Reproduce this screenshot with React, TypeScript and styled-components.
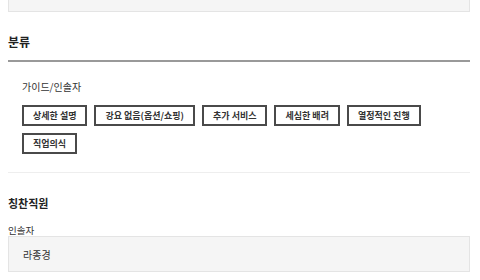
import styled, { createGlobalStyle } from "styled-components";

const GlobalStyle = createGlobalStyle`
  html, body {
    margin: 0;
    padding: 0;
    background: #fff;
  }
  body {
    font-family: "Noto Sans CJK KR", "Noto Sans", sans-serif;
    color: #333;
  }
`;

const Page = styled.div`
  width: 462px;
  padding: 0 10px 0 8px;
`;

const PrevField = styled.div`
  height: 11px;
  background-color: #f5f5f5;
  border: 1px solid #e4e4e4;
  border-top: none;
`;

const SectionHeader = styled.div`
  padding: 22px 0 10px;
  font-size: 12px;
  line-height: 16px;
  font-weight: bold;
  color: #222;
  border-bottom: 2px solid #999;
`;

const Group = styled.div`
  padding: 18px 14px 18px;
  border-bottom: 1px solid #eee;
`;

const GroupLabel = styled.div`
  font-size: 10px;
  line-height: 14px;
  color: #333;
  margin-bottom: 11px;
`;

const Chips = styled.div`
  display: flex;
  flex-wrap: wrap;
  gap: 7px 7px;
`;

const Chip = styled.button<{ $active?: boolean }>`
  height: 21px;
  padding: 0 9px;
  border: 2px solid #4a4a4a;
  background-color: ${(p) => (p.$active ? "#444" : "#fff")};
  color: ${(p) => (p.$active ? "#fff" : "#333")};
  font-family: inherit;
  font-size: 9px;
  font-weight: bold;
  line-height: 17px;
  cursor: pointer;
`;

const SubHeader = styled.div`
  margin-top: 22px;
  font-size: 11px;
  line-height: 16px;
  font-weight: bold;
  color: #222;
`;

const FieldLabel = styled.div`
  margin-top: 13px;
  font-size: 9.5px;
  line-height: 12px;
  color: #333;
`;

const ReadonlyField = styled.div`
  display: flex;
  align-items: center;
  height: 34px;
  padding-left: 14px;
  background-color: #f5f5f5;
  border: 1px solid #e4e4e4;
  font-size: 10px;
  color: #333;
`;

const categories = [
  "상세한 설명",
  "강요 없음(옵션/쇼핑)",
  "추가 서비스",
  "세심한 배려",
  "열정적인 진행",
  "직업의식",
];

const App = () => {
  return (
    <>
      <GlobalStyle />
      <Page>
        <PrevField />
        <SectionHeader>분류</SectionHeader>
        <Group>
          <GroupLabel>가이드/인솔자</GroupLabel>
          <Chips>
            {categories.map((c) => (
              <Chip key={c}>{c}</Chip>
            ))}
          </Chips>
        </Group>
        <SubHeader>칭찬직원</SubHeader>
        <FieldLabel>인솔자</FieldLabel>
        <ReadonlyField>라종경</ReadonlyField>
      </Page>
    </>
  );
};

export default App;
